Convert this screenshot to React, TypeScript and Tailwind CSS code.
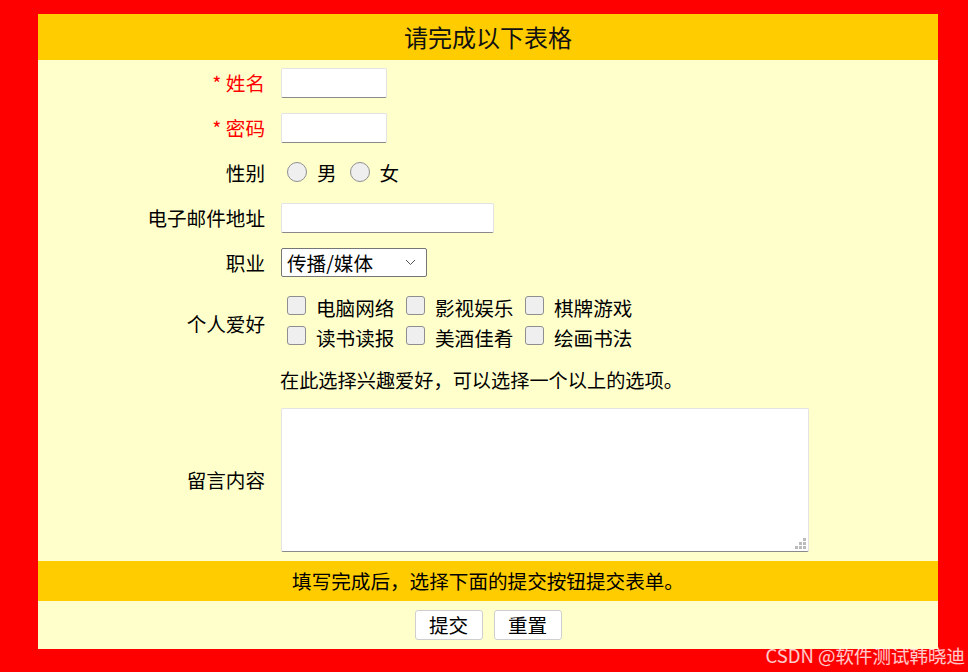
import React from "react";

const F = { fontFamily: '"Microsoft YaHei", "Noto Sans CJK SC", "Noto Sans", sans-serif' };

function Radio({ label }: { label: string }) {
  return (
    <span className="flex items-center">
      <span className="ml-[6px] w-[20px] h-[20px] rounded-full border border-[#8f8f8f] bg-[#efefef] box-border" />
      <span className="ml-[10px] mr-[7px]">{label}</span>
    </span>
  );
}

function Check({ label }: { label: string }) {
  return (
    <span className="flex items-center w-[119px]">
      <span className="ml-[6px] w-[19px] h-[19px] rounded-[3px] border border-[#8f8f8f] bg-[#efefef] box-border -translate-y-[2px]" />
      <span className="ml-[10px] leading-[30px]">{label}</span>
    </span>
  );
}

function Input({ w }: { w: string }) {
  return (
    <div
      className={`${w} h-[30px] bg-white rounded-[2px] border border-[#e3e3e3] border-b-[#8a8a8a] box-border`}
    />
  );
}

function Row({
  label,
  red,
  h,
  children,
}: {
  label: string;
  red?: boolean;
  h: string;
  children?: React.ReactNode;
}) {
  return (
    <div className={`flex items-center ${h}`}>
      <div className={`w-[227px] text-right ${red ? "text-[#ff0000]" : "text-black"}`}>
        {red ? "* " : ""}
        {label}
      </div>
      <div className="ml-[16px] flex items-center">{children}</div>
    </div>
  );
}

export default function App() {
  return (
    <div className="w-[968px] h-[672px] bg-[#ff0000] pt-[14px] pl-[38px] relative overflow-hidden" style={F}>
      <div className="w-[900px] bg-[#ffffcc] text-[19.6px] text-black">
        <div className="h-[46px] bg-[#ffcc00] flex items-center justify-center text-[24px] text-[#111]">
          请完成以下表格
        </div>
        <Row label="姓名" red h="h-[45px]">
          <Input w="w-[106px]" />
        </Row>
        <Row label="密码" red h="h-[45px]">
          <Input w="w-[106px]" />
        </Row>
        <Row label="性别" h="h-[45px]">
          <Radio label="男" />
          <Radio label="女" />
        </Row>
        <Row label="电子邮件地址" h="h-[45px]">
          <Input w="w-[213px]" />
        </Row>
        <Row label="职业" h="h-[45px]">
          <div className="w-[146px] h-[29px] bg-white border border-[#767676] rounded-[2px] box-border flex items-center justify-between pl-[5px] pr-[10px]">
            <span className="leading-none">传播/媒体</span>
            <svg width="11" height="7" viewBox="0 0 11 7">
              <path d="M1 1 L5.5 5.5 L10 1" fill="none" stroke="#555" strokeWidth="1" />
            </svg>
          </div>
        </Row>
        <div className="flex items-center h-[77px]">
          <div className="w-[227px] text-right">个人爱好</div>
          <div className="ml-[16px] flex flex-col -mt-[2px]">
            <div className="flex">
              <Check label="电脑网络" />
              <Check label="影视娱乐" />
              <Check label="棋牌游戏" />
            </div>
            <div className="flex">
              <Check label="读书读报" />
              <Check label="美酒佳肴" />
              <Check label="绘画书法" />
            </div>
          </div>
        </div>
        <div className="h-[36px] flex items-center pl-[242px] text-[19.2px]">
          在此选择兴趣爱好，可以选择一个以上的选项。
        </div>
        <div className="flex items-center h-[163px]">
          <div className="w-[227px] text-right">留言内容</div>
          <div className="ml-[16px] relative w-[528px] h-[144px] bg-white border border-[#e3e3e3] border-b-[#8a8a8a] box-border rounded-[2px]">
            <svg className="absolute right-[2px] bottom-[2px]" width="11" height="11" viewBox="0 0 11 11">
              <rect x="8" y="0" width="3" height="3" fill="#bbb" />
              <rect x="4" y="4" width="3" height="3" fill="#bbb" />
              <rect x="8" y="4" width="3" height="3" fill="#bbb" />
              <rect x="0" y="8" width="3" height="3" fill="#bbb" />
              <rect x="4" y="8" width="3" height="3" fill="#bbb" />
              <rect x="8" y="8" width="3" height="3" fill="#bbb" />
            </svg>
          </div>
        </div>
        <div className="h-[40px] bg-[#ffcc00] flex items-center justify-center">
          填写完成后，选择下面的提交按钮提交表单。
        </div>
        <div className="h-[48px] flex items-center justify-center gap-[11px]">
          <button className="w-[68px] h-[30px] bg-white border border-[#cfcfcf] rounded-[3px] text-[19.6px] leading-none">
            提交
          </button>
          <button className="w-[68px] h-[30px] bg-white border border-[#cfcfcf] rounded-[3px] text-[19.6px] leading-none">
            重置
          </button>
        </div>
      </div>
      <div className="absolute right-[3px] bottom-[8px] text-[18.5px] text-white/80 leading-none">
        CSDN @软件测试韩晓迪
      </div>
    </div>
  );
}
